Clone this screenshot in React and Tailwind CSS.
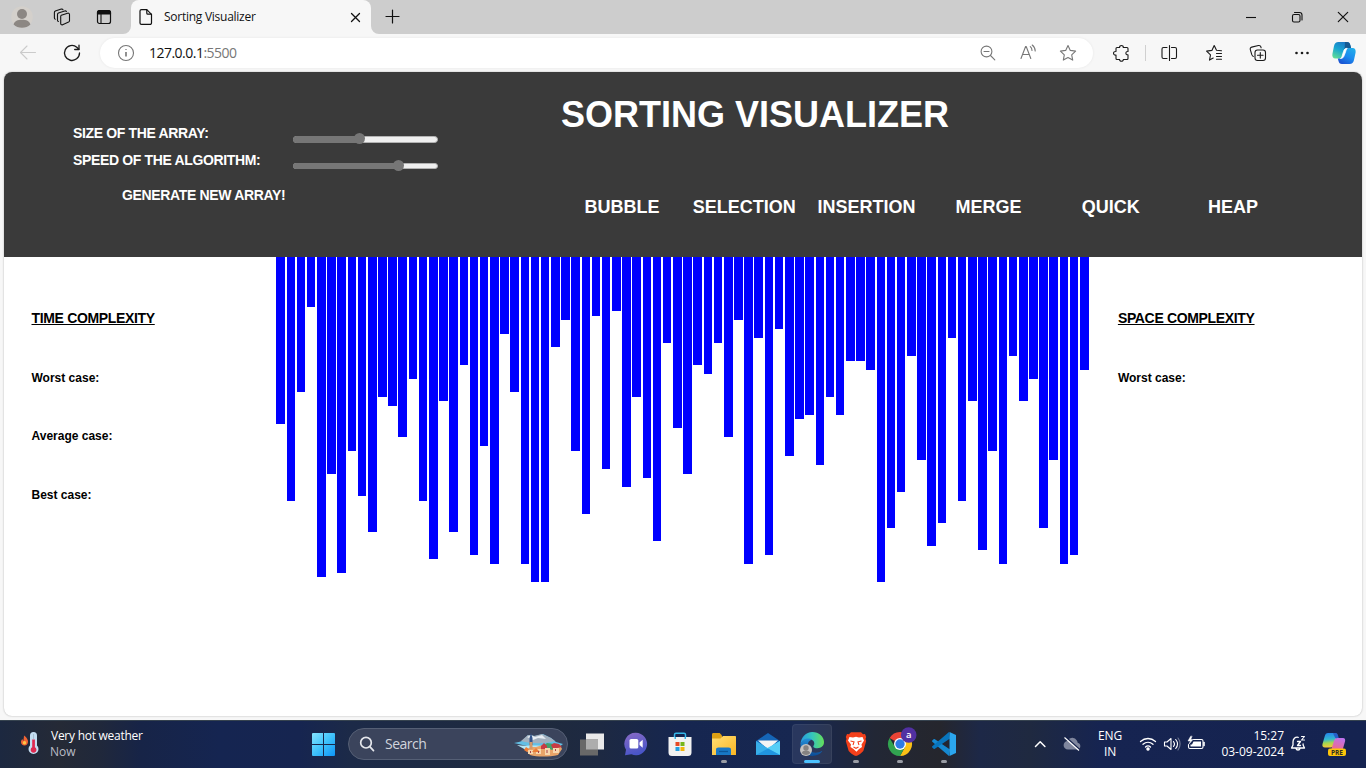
import React from "react";

const heights = [
  167, 244, 135, 50, 320, 217, 316, 194, 239, 275, 140, 149, 180, 122, 244, 302, 144, 275, 108, 298,
  189, 307, 77, 135, 307, 325, 325, 90, 63, 194, 257, 59, 212, 54, 230, 140, 221, 284, 86, 171,
  217, 108, 117, 86, 180, 63, 307, 81, 298, 72, 199, 162, 158, 208, 140, 158, 104, 104, 113, 325,
  271, 235, 99, 203, 289, 266, 81, 244, 144, 293, 194, 307, 99, 144, 122, 271, 203, 307, 298, 113,
];

const algorithms = ["BUBBLE", "SELECTION", "INSERTION", "MERGE", "QUICK", "HEAP"];

function Icon({ className = "size-6", box = "0 0 24 24", children }) {
  return (
    <svg className={`block shrink-0 ${className}`} viewBox={box} fill="none" stroke="currentColor" strokeWidth="1.1" strokeLinecap="round" strokeLinejoin="round">
      {children}
    </svg>
  );
}

function TitleBar() {
  return (
    <div className="flex h-[34px] bg-[#cdcdcd] text-[#111]">
      <div className="flex w-[131px] items-center pl-[10px]">
        <Icon className="size-6">
          <g stroke="none">
            <circle cx="12" cy="12" r="10.8" fill="#d4d0cb" />
            <circle cx="12" cy="9" r="5" fill="#8c8783" />
            <path d="M3.6 19.5c1-3.400 4-4.700 8.400-4.700s7.400 1.300 8.400 4.700c-2.300 2.300-5 3.300-8.400 3.300s-6.100-1-8.400-3.300z" fill="#8c8783" />
          </g>
        </Icon>
        <Icon className="ml-4 size-6">
          <path d="M11.300 10.300l6.300-2.100c1-.3 1.900.3 1.900 1.300v6.200c0 .7-.3 1.100-.9 1.400l-6 2.600c-1 .4-1.900-.2-1.900-1.200v-7c0-.6.200-1 .600-1.200z" />
          <path d="M8.500 16.500c-.7-.1-1-.5-1-1.200V9.500c0-.7.3-1.100.900-1.400l6.300-2.100c.8-.2 1.400 0 1.700.6" />
          <path d="M5.300 14.200c-.6-.2-.9-.6-.9-1.200V7.500c0-.7.3-1.100.900-1.400l6-2c.8-.2 1.400 0 1.700.6" />
        </Icon>
        <Icon className="ml-[18px] size-6">
          <rect x="5.500" y="5.500" width="13" height="13" rx="2" strokeWidth="1.200" />
          <path d="M5.500 9V7.500a2 2 0 0 1 2-2h9a2 2 0 0 1 2 2V9z" fill="currentColor" />
          <path d="M9 9v9" />
        </Icon>
      </div>
      <div className="relative flex w-60 items-center rounded-t-lg bg-[#f7f7f7] pl-2">
        <svg className="absolute bottom-0 -left-2 size-2" viewBox="0 0 8 8"><path d="M8 0v8H0a8 8 0 0 0 8-8z" fill="#f7f7f7" /></svg>
        <svg className="absolute -right-2 bottom-0 size-2" viewBox="0 0 8 8"><path d="M0 0v8h8a8 8 0 0 1-8-8z" fill="#f7f7f7" /></svg>
        <Icon className="h-4 w-[14px]" box="0 0 14 16">
          <path d="M2.500.6h5.300l4.700 4.700v8.600a1.500 1.500 0 0 1-1.500 1.500H2.500A1.500 1.500 0 0 1 1 13.900V2.100A1.500 1.500 0 0 1 2.500.6z" strokeWidth="1.200" />
          <path d="M7.800.8v3.400a1 1 0 0 0 1 1h3.500" strokeWidth="1.200" />
        </Icon>
        <span className="ml-[11px] w-[183px] text-[12px] leading-4 tracking-[-0.26px] whitespace-nowrap">Sorting Visualizer</span>
        <Icon className="size-4" box="0 0 16 16"><path d="M4.500 4.500l8 8M12.500 4.500l-8 8" strokeWidth="1.300" /></Icon>
      </div>
      <div className="flex flex-1 items-center justify-between pl-[14px]">
        <Icon className="size-4" box="0 0 16 16"><path d="M7.500 1v13M1 7.500h13" strokeWidth="1.200" /></Icon>
        <div className="flex">
          <Icon className="h-6 w-[46px]" box="0 0 46 24"><path d="M18 12.500h10" strokeLinecap="butt" /></Icon>
          <Icon className="h-6 w-[46px]" box="0 0 46 24">
            <rect x="18.500" y="9.500" width="7.500" height="7.500" rx="1.500" />
            <path d="M20.500 7.500h5a2.500 2.500 0 0 1 2.500 2.500v5" />
          </Icon>
          <Icon className="h-6 w-[46px]" box="0 0 46 24"><path d="M18.300 7.300l9.400 9.400M27.700 7.300l-9.400 9.400" strokeWidth="1.200" /></Icon>
        </div>
      </div>
    </div>
  );
}

function Copilot() {
  return (
    <svg className="ml-[18px] block h-[22px] w-6 shrink-0" viewBox="0 0 24 22">
      <defs>
        <linearGradient id="cpA" x1="0.700" y1="0" x2="0.200" y2="1"><stop offset="0" stopColor="#1b74c4" /><stop offset=".5" stopColor="#18a5d1" /><stop offset="1" stopColor="#5fdc97" /></linearGradient>
        <linearGradient id="cpB" x1="0.800" y1="0" x2="0.200" y2="1"><stop offset="0" stopColor="#22ade9" /><stop offset=".5" stopColor="#1c8bef" /><stop offset="1" stopColor="#1a4fd0" /></linearGradient>
      </defs>
      <path d="M6.500 0h8.300c2.200 0 3 1.200 3.500 3l.8 3h-4c-1.500 0-2.300.8-2.800 2.500l-1.500 5c-.6 2-1.600 3-3.500 3H3.500C1 16.500 0 14.500.4 12L2 4C2.600 1.400 4 0 6.500 0z" fill="url(#cpA)" />
      <path d="M13 0h1.800c2.200 0 3 1.200 3.500 3l.8 3h-4c-1.300 0-2 .6-2.500 1.800z" fill="#155a92" />
      <path d="M17.500 22H10c-2.200 0-3-1.200-3.500-3l-.7-2.500h1.700c1.900 0 2.900-1 3.500-3l1.500-5c.5-1.700 1.300-2.500 2.800-2.500h5.200c2.500 0 3.500 2 3.100 4.500L22 18c-.6 2.600-2 4-4.500 4z" fill="url(#cpB)" />
      <path d="M11.500 9.500c.7-2.300 1.800-3.200 3.700-3.200-1 1-1.300 2.200-1.700 3.700l-1.300 3.500c-.7 2-1.700 3-3.700 3 1-.5 1.400-1.500 1.800-3z" fill="#fff" stroke="#fff" strokeWidth=".8" />
    </svg>
  );
}

function Toolbar() {
  return (
    <div className="flex h-[38px] items-center bg-[#f7f7f7] text-[#1a1a1a]">
      <div className="flex w-[100px] items-center pl-4">
        <Icon className="size-6 text-[#cbcbcb]"><path d="M4.500 11.500h15M11 5l-6.500 6.500L11 18" /></Icon>
        <Icon className="ml-5 size-6">
          <path d="M19.500 12a7.500 7.500 0 1 1-2.700-5.800l2 2" strokeWidth="1.300" />
          <path d="M19 4.200v4.300h-4.300" strokeWidth="1.300" />
        </Icon>
      </div>
      <div className="flex h-[30px] w-[993px] items-center rounded-full bg-white pl-[14px] shadow-[0_0_3px_rgba(0,0,0,0.07)]">
        <Icon className="size-6 text-[#767676]">
          <circle cx="12" cy="12" r="7.500" />
          <path d="M12 11v4.500M12 8.300v.7" strokeWidth="1.600" strokeLinecap="butt" />
        </Icon>
        <span className="ml-[11px] w-[827px] pb-px text-[14px] tracking-[-0.52px] text-[#777]"><span className="text-[#111]">127.0.0.1</span>:5500</span>
        <Icon className="size-6 text-[#777]"><circle cx="10.500" cy="10.500" r="5.400" /><path d="M14.500 14.500l4.300 4.300M8 10.500h5" /></Icon>
        <Icon className="ml-4 size-6 text-[#777]">
          <path d="M5 17.500l4.600-12h.6l4.600 12M6.700 13.500h6.400" />
          <path d="M14.300 5.700c1.200 1 1.700 2.200 1.700 3.800M16.200 4c2 1.600 3 3.600 3 6" />
        </Icon>
        <Icon className="ml-4 size-6 text-[#777]"><path d="M12 4.500l2.300 4.900 5.300.7-3.900 3.700 1 5.300-4.700-2.600-4.700 2.600 1-5.300-3.900-3.700 5.300-.7z" /></Icon>
      </div>
      <div className="flex flex-1 items-center pl-4">
        <Icon className="size-6">
          <path d="M8 6.500h2.600c-.3-2.700 4-2.700 3.700 0H18a1 1 0 0 1 1 1v3c-2.800-.3-2.800 3.600 0 3.300V17.500a1 1 0 0 1-1 1h-3.700c.3 2.300-4 2.300-3.700 0H8a1 1 0 0 1-1-1v-3.400c-3.300.5-3.300-4.100 0-3.600V7.500a1 1 0 0 1 1-1z" />
        </Icon>
        <div className="ml-3 h-4 w-px bg-[#d0d0d0]" />
        <Icon className="ml-3 size-6">
          <path d="M9 6.500H5.500A1.500 1.500 0 0 0 4 8v8a1.500 1.500 0 0 0 1.500 1.500H9M13.500 6.500h3.500A1.500 1.500 0 0 1 18.500 8v8a1.500 1.500 0 0 1-1.500 1.500h-3.500M11.500 4.500v15" />
        </Icon>
        <Icon className="ml-5 size-6">
          <path d="M19.500 9.800l-5-.5L12.200 4.500 9.900 9.400l-5.300.7 3.900 3.700-1 5.300 3.700-2M14.500 12.500h5M14.500 15.500h5M14.500 18.300h5" />
        </Icon>
        <Icon className="ml-5 size-6">
          <rect x="9" y="9" width="10.500" height="10.500" rx="2.500" />
          <path d="M14.300 11.500v5.600M11.500 14.300h5.600M7.300 15.500c-.8-.3-1.200-.9-1.500-1.800L4.300 8.600c-.3-1.200.2-2.200 1.400-2.500l6.700-1.600c1.200-.2 2.200.3 2.500 1.400l.2.900" />
        </Icon>
        <Icon className="ml-5 size-6"><g fill="currentColor" stroke="none"><circle cx="6.500" cy="12" r="1.300" /><circle cx="12" cy="12" r="1.300" /><circle cx="17.500" cy="12" r="1.300" /></g></Icon>
        <Copilot />
      </div>
    </div>
  );
}

function Slider({ fill, className, thumbClass }) {
  return (
    <div className={`relative flex w-[145px] rounded-full border border-[#b2b2b2] bg-[#efefef] ${className}`}>
      <div className="-m-px rounded-l-full bg-[#767676]" style={{ width: fill }} />
      <div className={`absolute size-[11px] rounded-full bg-[#767676] ${thumbClass}`} style={{ left: fill - 8 }} />
    </div>
  );
}

function PageHeader() {
  return (
    <header className="flex h-[185px] bg-[#3a3a3a] font-bold text-white">
      <div className="w-[557px] pt-[53px] pl-[69px] text-[14px] leading-4 tracking-[-0.35px] whitespace-nowrap">
        <div className="flex">
          <span className="w-[220px]">SIZE OF THE ARRAY:</span>
          <Slider fill={68} className="mt-[11px] h-[7px]" thumbClass="-top-[4px]" />
        </div>
        <div className="mt-[9px] flex h-[18px]">
          <span className="w-[220px]">SPEED OF THE ALGORITHM:</span>
          <Slider fill={107} className="mt-[11px] h-[6px]" thumbClass="-top-[4px]" />
        </div>
        <div className="mt-[17px] pl-[49px] tracking-[-0.34px]">GENERATE NEW ARRAY!</div>
      </div>
      <div className="w-[733px] pt-[22px]">
        <h1 className="text-[36px] leading-[42px] whitespace-nowrap">SORTING VISUALIZER</h1>
        <div className="mt-[60px] grid grid-cols-6 text-center text-[18px] leading-[22px]">
          {algorithms.map((a) => <span key={a}>{a}</span>)}
        </div>
      </div>
    </header>
  );
}

function Complexity({ title, cases }) {
  return (
    <section className="w-1/5 pt-[53px] pl-[27.5px] font-bold text-black">
      <h2 className="text-[14px] leading-4 tracking-[-0.34px] underline underline-offset-1">{title}</h2>
      <div className="mt-[43.600px] flex flex-col gap-[42.500px] text-[12px] leading-4">
        {cases.map((c) => <p key={c}>{c}</p>)}
      </div>
    </section>
  );
}

function Dot() {
  return <span className="absolute bottom-[5px] left-1/2 h-[3px] w-[6px] -translate-x-1/2 rounded-full bg-[#9a9da5]" />;
}

function TaskItem({ children, running }) {
  return (
    <div className="relative flex h-12 w-11 shrink-0 items-center justify-center">
      {children}
      {running && <Dot />}
    </div>
  );
}

function Svg({ className = "size-6", box = "0 0 24 24", children }) {
  return <svg className={`block shrink-0 ${className}`} viewBox={box}>{children}</svg>;
}

function TaskIcons() {
  return (
    <div className="flex w-[398px] pl-[2px]">
      <TaskItem>
        <Svg><path d="M6 1.500h18v16H6z" fill="#e9e9e9" /><path d="M0 7.500h18v16H0z" fill="#686868" /><path d="M6 7.500h12v10H6z" fill="#adadad" /></Svg>
      </TaskItem>
      <TaskItem>
        <Svg>
          <defs><linearGradient id="chat" x1="0" y1="0" x2="0.300" y2="1"><stop offset="0" stopColor="#8a6bc5" /><stop offset="1" stopColor="#4955c8" /></linearGradient></defs>
          <path d="M12 .8a11.200 11.200 0 1 1-4.500 21.500L1 23.300l1-5.500A11.200 11.200 0 0 1 12 .8z" fill="url(#chat)" />
          <rect x="5.500" y="7" width="8.800" height="9.500" rx="1.600" fill="#fff" /><path d="M15.500 10.500l3.200-2.700v8l-3.200-2.700z" fill="#fff" />
        </Svg>
      </TaskItem>
      <TaskItem>
        <Svg>
          <path d="M6.500 5V2.700c0-1 .5-1.500 1.500-1.500h8c1 0 1.500.5 1.500 1.500V6" fill="none" stroke="#35b8ea" strokeWidth="1.500" />
          <path d="M.5 5h23v15.500a3.500 3.500 0 0 1-3.500 3.500H4a3.500 3.500 0 0 1-3.500-3.500z" fill="#f2f2f2" />
          <path d="M6.500 5h1.500v2H6.500zM16.500 5H18v2h-1.500z" fill="#35b8ea" />
          <path d="M7.500 10h4v4h-4z" fill="#e64a25" /><path d="M12.500 10h4v4h-4z" fill="#76b51b" /><path d="M7.500 15h4v4h-4z" fill="#239fe0" /><path d="M12.500 15h4v4h-4z" fill="#f3b50c" />
        </Svg>
      </TaskItem>
      <TaskItem running>
        <Svg>
          <defs><linearGradient id="fold" x1="0" y1="0" x2="1" y2="1"><stop offset="0" stopColor="#ffdf75" /><stop offset="1" stopColor="#f9b523" /></linearGradient></defs>
          <path d="M0 2.500C0 1.500.6 1 1.500 1h6.200L10 3.500V8H0z" fill="#dda013" />
          <path d="M0 6.500h8.500L11 4h12c.7 0 1 .4 1 1v18H0z" fill="url(#fold)" />
          <path d="M4 23v-5c0-1.800.8-2.500 2.500-2.500h10c1.700 0 2.500.7 2.500 2.500v5z" fill="#1878c6" /><path d="M7 19.500h9" stroke="#0b569a" strokeWidth="1.300" />
        </Svg>
      </TaskItem>
      <TaskItem>
        <Svg>
          <path d="M12 1L24 9v14H0V9z" fill="#1565b6" /><path d="M2 8.500h20l-10 9z" fill="#f5f5f5" />
          <path d="M0 9l12 7.300L24 9v14H0z" fill="#38aee9" /><path d="M24 9v14L11 16.200z" fill="#55cef6" /><path d="M0 23l12-6.500L24 23z" fill="#2095df" />
        </Svg>
      </TaskItem>
      <div className="relative flex h-12 w-11 shrink-0 items-center justify-center">
        <div className="flex h-10 w-10 items-center justify-center rounded border border-white/5 bg-white/[0.08]">
          <Svg>
            <defs>
              <linearGradient id="edA" x1="0" y1="0.500" x2="1" y2="0.500"><stop offset="0" stopColor="#279be1" /><stop offset=".5" stopColor="#35c5bc" /><stop offset="1" stopColor="#65df59" /></linearGradient>
              <linearGradient id="edB" x1="0" y1="0" x2="0" y2="1"><stop offset="0" stopColor="#248fd8" /><stop offset="1" stopColor="#0b4b96" /></linearGradient>
            </defs>
            <path d="M.5 12C1 5 6 0 12.300 0 19 0 24 4.700 24 10c0 4-3 6.200-6.500 6.200-2.500 0-4.200-.8-4.200-1.800 0-.8 1-1.300 1-3C14.300 8.800 11.500 7 8 7 4.500 7 2 9 .5 12z" fill="url(#edA)" />
            <path d="M.5 12C2 8 5 6.500 8 6.500c1.500 0 3 .4 4 1-3 .7-4.300 3.500-4.300 6 0 5 4.800 8.500 11.300 6.700 1-.3 2-.8 2.700-1.300.4 0 .6.300.3.700C19.700 22.500 16.500 24 12.500 24 5 24 0 18.500.5 12z" fill="url(#edB)" />
            <circle cx="6" cy="18" r="6" fill="#c5c2c0" /><circle cx="6" cy="16" r="2.700" fill="#858281" /><path d="M1.700 21c.8-2 2.400-2.600 4.300-2.600s3.500.6 4.300 2.600A6 6 0 0 1 6 23a6 6 0 0 1-4.300-2z" fill="#858281" />
          </Svg>
        </div>
        <span className="absolute bottom-[5px] left-[14px] h-[3px] w-4 rounded-full bg-[#4cc2ff]" />
      </div>
      <TaskItem running>
        <Svg>
          <path d="M7 .2h10l2 2.100 2-.2 1.200 3L21.500 7l.7 2-2.700 9.500c-.5 1.800-6.200 5.500-7.500 5.500s-7-3.700-7.500-5.500L1.800 9l.7-2-.7-1.900L3 2.100l2 .2z" fill="#f4401b" />
          <path d="M5.500 5l3.500.4 3-.7 3 .7 3.500-.4 1.500 3.500-2.500 4 .5 2.500-3 2-2.500 2.700L9.500 17l-3-2 .5-2.500-3-4z" fill="#fff" />
          <path d="M6.500 9l3.500.8-1 3.200M17.500 9l-3.500.8 1 3.200M9.500 15l2.500 1.300 2.500-1.300" fill="none" stroke="#f4401b" strokeWidth="1.100" />
        </Svg>
      </TaskItem>
      <TaskItem running>
        <Svg className="size-6 overflow-visible">
          <path d="M12 12L1.600 6A12 12 0 0 1 22.400 6z" fill="#e94335" /><path d="M12 12L22.400 6A12 12 0 0 1 12 24l5-9z" fill="#fbc116" /><path d="M12 24A12 12 0 0 1 1.600 6L7 15l10 0z" fill="#31a450" /><path d="M12 6h10.400L12 12z" fill="#e94335" />
          <circle cx="12" cy="12" r="6" fill="#fff" /><circle cx="12" cy="12" r="4.700" fill="#2d7be6" />
          <circle cx="20.700" cy="3" r="7.800" fill="#5130a2" />
          <text x="20.700" y="6" textAnchor="middle" fontSize="9.500" fontWeight="600" fill="#fff">a</text>
        </Svg>
      </TaskItem>
      <TaskItem running>
        <Svg>
          <path d="M1.600 7.200L.3 8.400c-.4.400-.4.900 0 1.300L17 24l1-6.500L2.900 7.200c-.5-.3-.9-.3-1.300 0z" fill="#1689d1" />
          <path d="M1.600 16.800L.3 15.600c-.4-.4-.4-.9 0-1.300L17 0l1 6.500L2.900 16.800c-.5.300-.9.300-1.300 0z" fill="#0875bd" />
          <path d="M17.500 0L24 3v18l-6.500 3z" fill="#2ba6ee" />
        </Svg>
      </TaskItem>
    </div>
  );
}

function Taskbar() {
  return (
    <footer className="flex h-12 items-center bg-[linear-gradient(90deg,#1c2840_0,#252a36_60px,#20283b_100px,#172447_140px,#152551_220px,#162550_300px,#1c2a48_350px,#1f2a3d_540px,#1d2942_600px,#162650_680px,#172751_800px,#222735_875px,#25262d_940px,#1d2847_980px,#1f2940_1030px,#162451_1100px,#152350_1366px)] text-white shadow-[inset_0_1px_0_#36434f]">
      <div className="flex w-[309px] items-center pl-5">
        <Svg className="-mt-[3px] h-6 w-5" box="0 0 20 24">
          <path d="M4 4.500c3 2 4 4.300 4 6.300 0 2.300-1.500 3.700-3.500 3.700S1 13 1 11c0-1.300.7-2.300 1.500-3 .1 1 .4 1.500 1 1.700 0-2 .5-3.500.5-5.200z" fill="#f26433" /><circle cx="4.500" cy="11.700" r="1.700" fill="#ffc648" />
          <path d="M10 4.500a3.500 3.500 0 0 1 7 0v10a5 5 0 1 1-7 0z" fill="#c5def2" /><path d="M12.200 8.500h2.700v7.800a2.900 2.900 0 1 1-2.700 0z" fill="#de294f" /><path d="M13.600 3v5" stroke="#a5bccd" />
        </Svg>
        <div className="ml-[11px] text-[12px] leading-4 whitespace-nowrap">
          <p className="tracking-[-0.26px]">Very hot weather</p>
          <p className="-ml-px text-[#b9bcc6]">Now</p>
        </div>
      </div>
      <div className="flex w-[39px] pl-[3px]">
        <Svg className="mt-px size-[23px]" box="0 0 23 23">
          <defs><linearGradient id="win" x1="0" y1="0" x2="1" y2="1"><stop offset="0" stopColor="#85e4ff" /><stop offset=".5" stopColor="#3fc2fb" /><stop offset="1" stopColor="#0d94f7" /></linearGradient></defs>
          <path d="M0 1a1 1 0 0 1 1-1h10v11H0zM12 0h10a1 1 0 0 1 1 1v10H12zM0 12h11v11H1a1 1 0 0 1-1-1zM12 12h11v10a1 1 0 0 1-1 1H12z" fill="url(#win)" />
        </Svg>
      </div>
      <div className="flex h-8 w-[220px] items-center rounded-full border border-[#555f75] bg-[#3b445c] pl-[10px]">
        <Icon className="size-4 text-[#e5e7ec]" box="0 0 16 16"><circle cx="7" cy="6.700" r="5.300" strokeWidth="1.700" /><path d="M10.800 10.700l3.700 4" strokeWidth="1.700" /></Icon>
        <span className="ml-[10px] w-[129px] pb-px text-[14px] tracking-[-0.5px] text-[#d1d4dc]">Search</span>
        <Svg className="mt-[2px] h-6 w-[50px]" box="0 0 50 24">
          <path d="M0 10c3-.5 7-1 9-3l5-5 7 1 8-2 8 4 5 4 7 2-4 3c-9 3-27 3-36 0l4-1z" fill="#62bfe5" />
          <path d="M7 8l7-6 6 1 8-2 9 4 4 3c-11 3-23 3-34 0z" fill="#a2afbd" /><path d="M13 4l4-2 4 2 7-2 4 4-8-1-5 2z" fill="#e7edf3" />
          <path d="M3 12c10 2 20-1 28 2l6 1-5 3-20-1z" fill="#b8e7f3" />
          <path d="M12 17l5-3 5 0 7-2 8 1 9-1 2 4-4 6c-9 2-21 2-28 0z" fill="#e8a469" />
          <path d="M15.500 5l1.500-5 1.500 5v7h-3z" fill="#33548b" /><path d="M15.500 9h3v7h-3z" fill="#d2996a" />
          <path d="M29 13l4-3 7 1 3 3-5 3z" fill="#44a06b" /><path d="M27 13l3-3 3 3v3h-6zM37 12l3-2 5 1 3 3-9 2z" fill="#c73b43" />
          <path d="M14 17h5v4h-5zM22 16h5v5h-5zM31 15h5v7h-5zM39 15h6v5h-6z" fill="#f7d6ad" /><path d="M12 14l3 2-2 3-3-2zM18 19l4-4 4 4z" fill="#ee7c35" />
          <path d="M24 18h1v2h-1zM32.500 17h1v3h-1zM41 16h1v2h-1zM16 18h1v2h-1z" fill="#a9444a" />
        </Svg>
      </div>
      <TaskIcons />
      <div className="flex flex-1 items-center pl-[62px] text-[12px] leading-4">
        <Icon className="h-6 w-6"><path d="M7.500 14.500l4.700-4.700 4.700 4.700" strokeWidth="1.500" /></Icon>
        <Svg className="ml-2 size-6 text-white">
          <path d="M8 17.500a4.300 4.300 0 0 1-.2-8.600 5 5 0 0 1 9-.4c.5.800.9 1.800 1 2.600 3.500 0 3.400 6.400-.3 6.400z" fill="#7f869d" /><path d="M5.500 4.800l14 12.500" stroke="#16234c" strokeWidth="1.300" /><path d="M4.500 5.500l14.500 13" stroke="#fff" strokeWidth="1.100" />
        </Svg>
        <div className="ml-[10px] w-[32px] text-center tracking-[-0.2px]"><p>ENG</p><p>IN</p></div>
        <Icon className="ml-[10px] size-6">
          <path d="M4.500 9.500c4.500-4 10.500-4 15 0M7 12.300c3-2.700 7-2.700 10 0M9.500 15c1.500-1.300 3.500-1.300 5 0" strokeWidth="1.300" /><circle cx="12" cy="17" r="1.200" fill="currentColor" />
        </Icon>
        <Icon className="size-6">
          <path d="M4.500 10v4H7l4 3.500v-11L7 10zM13.500 9.500c1.200 1.500 1.200 3.500 0 5" /><path d="M15.700 7.500c2.200 2.700 2.200 6.300 0 9" /><path d="M18 6c2.800 3.500 2.800 8.500 0 12" stroke="#737b95" />
        </Icon>
        <Icon className="size-6">
          <path d="M9.500 7.500h8a1.500 1.500 0 0 1 1.500 1.500v6a1.500 1.500 0 0 1-1.500 1.500H6A1.500 1.500 0 0 1 4.500 15v-2.500" /><path d="M9.500 9.500h7.500v5H6.500v-2h1.500z" fill="currentColor" stroke="none" /><path d="M6.500 4.500L4 9h2.500L5 12l4-4.500H6.700l1.300-3z" fill="currentColor" strokeWidth=".5" /><path d="M20 10.500v3" strokeWidth="1.600" />
        </Icon>
        <div className="ml-[10px] w-[66px] text-right whitespace-nowrap"><p>15:27</p><p>03-09-2024</p></div>
        <Icon className="ml-[2px] size-6">
          <path d="M12.200 5.300C9 4.700 7 7 7 10v3l-1.500 3h13l-1.400-3v-1M10 16.500c.5 2 3.500 2 4 0M11.500 9.500h3l-3 4h3" strokeWidth="1.300" /><path d="M15.500 4.500h3l-3 3.500h3" strokeWidth="1.100" />
        </Icon>
        <Svg className="ml-[12px] size-6">
          <defs>
            <linearGradient id="preA" x1="0.200" y1="0" x2="0.300" y2="1"><stop offset="0" stopColor="#2383ec" /><stop offset=".45" stopColor="#34b9ce" /><stop offset=".7" stopColor="#a6d74d" /><stop offset="1" stopColor="#f8c73a" /></linearGradient>
            <linearGradient id="preB" x1="0.700" y1="0" x2="0.300" y2="1"><stop offset="0" stopColor="#bd72ee" /><stop offset="1" stopColor="#f36983" /></linearGradient>
          </defs>
          <path d="M6 1h7c1.700 0 2.200 1.400 2.700 3l.5 2h-.5c-1.200 0-1.700.6-2.200 2l-1.700 5c-.6 1.700-1.300 2.500-3 2.500H3c-2.200 0-3-1.500-2.500-3.500L2.800 4C3.400 2 4.300 1 6 1z" fill="url(#preA)" />
          <path d="M11 1h2.500c1.700 0 2.200 1.400 2.700 3l.5 2h-3.500z" fill="#2560c9" />
          <path d="M15.500 6H21c2 0 2.500 1.600 2 3.500l-2 7c-.5 1.500-1 2-2.500 2H9l2.800-9C12.500 7 13.500 6 15.500 6z" fill="url(#preB)" />
          <rect x="6" y="16.500" width="18" height="7.500" rx="2" fill="#fdc60b" />
          <text x="15" y="22.700" textAnchor="middle" fontSize="6.500" fontWeight="700" fill="#312d24">PRE</text>
        </Svg>
      </div>
    </footer>
  );
}

export default function App() {
  return (
    <div className="flex h-[768px] w-[1366px] flex-col overflow-hidden bg-[#f7f7f7] font-['Open_Sans','Noto_Sans',sans-serif]">
      <TitleBar />
      <Toolbar />
      <main className="mx-1 mb-1 h-[644px] overflow-hidden rounded-lg bg-white font-['Liberation_Sans',Arial,sans-serif] shadow-[0_0_2px_rgba(0,0,0,0.3)]">
        <PageHeader />
        <div className="flex">
          <Complexity title="TIME COMPLEXITY" cases={["Worst case:", "Average case:", "Best case:"]} />
          <div className="flex w-3/5 items-start">
            {heights.map((height, i) => (
              <div key={i} className="mx-[0.1%] w-[1.05%] shrink-0 bg-[#00f]" style={{ height }} />
            ))}
          </div>
          <Complexity title="SPACE COMPLEXITY" cases={["Worst case:"]} />
        </div>
      </main>
      <Taskbar />
    </div>
  );
}
